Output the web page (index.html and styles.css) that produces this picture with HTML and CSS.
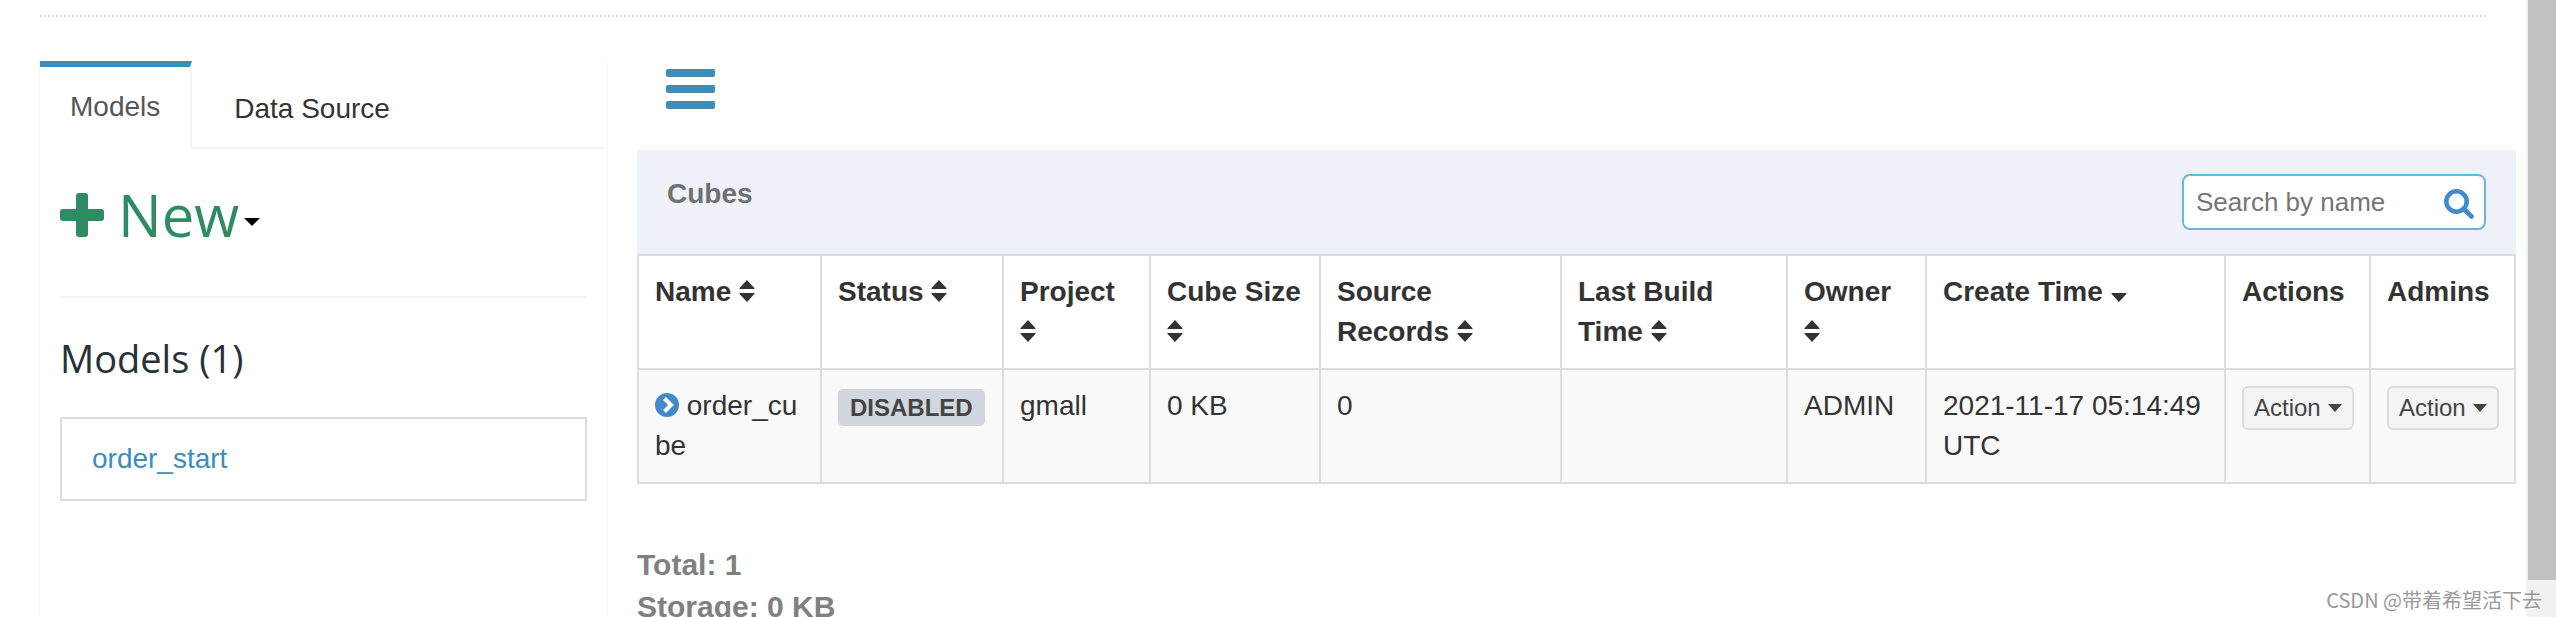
FILE: index.html
```html
<!DOCTYPE html>
<html lang="en">
<head>
    <meta charset="UTF-8">
    <meta name="viewport" content="width=device-width, initial-scale=1.0">
    <title>Cubes</title>
    <link rel="stylesheet" href="styles.css">
</head>
<body>
    <svg class="sprite" aria-hidden="true">
        <symbol id="sort" viewBox="0 0 16 22"><path d="M8 0 15.6 8.2Q16 9 15 9H1Q0 9 .4 8.2ZM1 13H15Q16 13 15.6 13.8L8 22 .4 13.8Q0 13 1 13Z"/></symbol>
        <symbol id="sort-down" viewBox="0 0 16 22"><path d="M1 13H15Q16 13 15.6 13.8L8 22 .4 13.8Q0 13 1 13Z"/></symbol>
    </svg>

    <div class="page">
        <hr class="divider">
        <div class="columns">
            <aside class="sidebar">
                <nav class="tabs">
                    <a class="tab active" href="#models">Models</a>
                    <a class="tab" href="#source">Data Source</a>
                </nav>
                <div class="tab-content">
                    <button class="new-btn" type="button">
                        <svg class="plus" viewBox="0 0 44 44"><path d="M19 0H25Q28 0 28 3V16H41Q44 16 44 19V25Q44 28 41 28H28V41Q28 44 25 44H19Q16 44 16 41V28H3Q0 28 0 25V19Q0 16 3 16H16V3Q16 0 19 0Z"/></svg>
                        <span>New</span>
                        <i class="caret"></i>
                    </button>
                    <hr class="line">
                    <h3 class="title">Models (1)</h3>
                    <ul class="models">
                        <li><a href="#order_start">order_start</a></li>
                    </ul>
                </div>
            </aside>

            <main class="content">
                <button class="menu-btn" type="button" aria-label="Toggle menu">
                    <svg viewBox="0 0 49 40"><rect width="49" height="8" rx="2"/><rect y="16" width="49" height="8" rx="2"/><rect y="32" width="49" height="8" rx="2"/></svg>
                </button>
                <div class="panel-head">
                    <h4>Cubes</h4>
                    <form class="search">
                        <input type="text" placeholder="Search by name" aria-label="Search by name">
                        <button type="button" aria-label="Search">
                            <svg viewBox="0 0 30 30"><circle cx="12.5" cy="12.5" r="10.2"/><path d="M20 20 27.5 27.5"/></svg>
                        </button>
                    </form>
                </div>
                <table class="cubes">
                    <colgroup>
                        <col class="c-name"><col class="c-status"><col class="c-project"><col class="c-size"><col class="c-records">
                        <col class="c-build"><col class="c-owner"><col class="c-time"><col class="c-action"><col class="c-action">
                    </colgroup>
                    <thead>
                        <tr>
                            <th>Name <svg class="sort"><use href="#sort"/></svg></th>
                            <th>Status <svg class="sort"><use href="#sort"/></svg></th>
                            <th>Project <svg class="sort"><use href="#sort"/></svg></th>
                            <th>Cube Size <svg class="sort"><use href="#sort"/></svg></th>
                            <th>Source Records <svg class="sort"><use href="#sort"/></svg></th>
                            <th>Last Build Time <svg class="sort"><use href="#sort"/></svg></th>
                            <th>Owner <svg class="sort"><use href="#sort"/></svg></th>
                            <th>Create Time <svg class="sort"><use href="#sort-down"/></svg></th>
                            <th>Actions</th>
                            <th>Admins</th>
                        </tr>
                    </thead>
                    <tbody>
                        <tr>
                            <td class="name"><svg class="chevron" viewBox="0 0 24 24"><circle cx="12" cy="12" r="12"/><path d="M9.5 5.5 16 12 9.5 18.5"/></svg> order_cube</td>
                            <td><span class="label">DISABLED</span></td>
                            <td>gmall</td>
                            <td>0 KB</td>
                            <td>0</td>
                            <td></td>
                            <td>ADMIN</td>
                            <td>2021-11-17 05:14:49 UTC</td>
                            <td><button class="action" type="button">Action <i class="caret"></i></button></td>
                            <td><button class="action" type="button">Action <i class="caret"></i></button></td>
                        </tr>
                    </tbody>
                </table>
                <div class="summary">
                    <div>Total: 1</div>
                    <div>Storage: 0 KB</div>
                </div>
            </main>
        </div>
    </div>

    <div class="scrollbar"><div class="thumb"></div></div>
    <div class="watermark">CSDN @带着希望活下去</div>
</body>
</html>
```

FILE: styles.css
```css
* {
    box-sizing: border-box;
}

body {
    margin: 0;
    display: flex;
    height: 100vh;
    overflow: hidden;
    background: #fff;
    color: #333;
    font-family: "Liberation Sans", Arial, sans-serif;
    font-size: 28px;
    line-height: 40px;
}

button {
    padding: 0;
    border: 0;
    background: none;
    font-family: inherit;
    cursor: pointer;
}

a {
    text-decoration: none;
}

.sprite {
    position: absolute;
    width: 0;
    height: 0;
}

.page {
    flex: 1;
    min-width: 0;
    display: flex;
    flex-direction: column;
    padding: 15px 10px 0 39px;
}

.divider {
    align-self: stretch;
    margin: 0 30px 44px 1px;
    border: 0;
    border-top: 2px dotted #ddd;
}

.columns {
    flex: 1;
    display: grid;
    grid-template-columns: 569px 1fr;
    gap: 29px;
}

/* sidebar */
.sidebar {
    border: solid #f7f7f7;
    border-width: 0 1px;
}

.tabs {
    display: flex;
    border-bottom: 2px solid #f4f4f4;
}

.tab {
    padding: 26px 42px 18px;
    border-top: 2px solid transparent;
    color: #333;
}

.tab.active {
    padding: 20px 30px;
    margin-bottom: -2px;
    border-top: 6px solid #3c8dbc;
    border-right: 2px solid #f4f4f4;
    background: #fff;
    color: #555;
}

.tab-content {
    padding: 26px 20px;
}

.new-btn {
    display: flex;
    align-items: center;
    height: 80px;
    color: #2e8b62;
    font-family: "Open Sans", "Noto Sans", sans-serif;
    font-size: 58px;
    line-height: 80px;
}

.plus {
    width: 44px;
    height: 44px;
    margin-right: 14px;
    fill: currentColor;
}

.caret {
    display: inline-block;
    border: solid transparent;
    border-width: 8px 8px 0;
    border-top-color: currentColor;
}

.new-btn .caret {
    margin: 14px 0 0 5px;
    color: #000;
}

.line {
    margin: 41px 0 0;
    border: 0;
    border-top: 2px solid #f4f4f4;
}

.title {
    margin: 35px 0 34px;
    color: #263238;
    font-family: "Open Sans", "Noto Sans", sans-serif;
    font-size: 38px;
    font-weight: 400;
    line-height: 50px;
}

.models {
    margin: 0;
    padding: 0;
    list-style: none;
}

.models li {
    padding: 20px 30px;
    border: 2px solid #ddd;
}

.models a {
    color: #3c8dbc;
}

/* cube list */
.menu-btn {
    display: block;
    margin: 8px 0 41px 29px;
}

.menu-btn svg {
    display: block;
    width: 49px;
    height: 40px;
    fill: #3c8dbc;
}

.panel-head {
    display: flex;
    justify-content: space-between;
    align-items: flex-start;
    height: 104px;
    padding: 24px 30px;
    background: #eef1f7;
}

.panel-head h4 {
    margin: 0;
    color: #707070;
    font-size: 28px;
    line-height: 40px;
}

.search {
    display: flex;
    align-items: center;
    width: 304px;
    height: 56px;
    padding: 0 10px 0 12px;
    border: 2px solid #6cb3e1;
    border-radius: 8px;
    background: #fff;
}

.search input {
    flex: 1;
    min-width: 0;
    padding: 0;
    border: 0;
    outline: 0;
    background: none;
    color: #333;
    font-family: inherit;
    font-size: 26px;
}

.search input::placeholder {
    color: #757575;
}

.search svg {
    display: block;
    width: 30px;
    height: 30px;
    margin-top: 4px;
    fill: none;
    stroke: #428bca;
    stroke-width: 4.6;
    stroke-linecap: round;
}

.cubes {
    width: 100%;
    border-collapse: collapse;
    table-layout: fixed;
}

.c-name { width: 183px; }
.c-status { width: 182px; }
.c-project { width: 147px; }
.c-size { width: 170px; }
.c-records { width: 241px; }
.c-build { width: 226px; }
.c-owner { width: 139px; }
.c-time { width: 299px; }
.c-action { width: 145px; }

.cubes th,
.cubes td {
    padding: 16px;
    border: 2px solid #ddd;
    text-align: left;
    vertical-align: top;
}

.cubes tbody td {
    background: #f9f9f9;
}

.cubes .name {
    word-break: break-all;
}

.sort {
    width: 16px;
    height: 22px;
    margin-bottom: -1px;
    fill: #333;
}

.chevron {
    width: 24px;
    height: 24px;
    margin-bottom: -2px;
    fill: #428bca;
}

.chevron path {
    fill: none;
    stroke: #fff;
    stroke-width: 4;
}

.label {
    display: inline-block;
    margin-top: 3px;
    padding: 0 12px;
    border-radius: 5px;
    background: #d2d6de;
    color: #444;
    font-size: 24px;
    font-weight: 700;
    line-height: 37px;
    vertical-align: top;
}

.action {
    display: flex;
    align-items: center;
    gap: 7px;
    height: 44px;
    padding: 0 10px;
    border: 2px solid #ddd;
    border-radius: 6px;
    background: #f4f4f4;
    color: #444;
    font-size: 24px;
    line-height: 36px;
}

.action .caret {
    border-width: 8px 7px 0;
}

.summary {
    margin-top: 60px;
    color: #808080;
    font-size: 30px;
    font-weight: 700;
    line-height: 42px;
}

.scrollbar {
    width: 30px;
    padding-left: 2px;
    background: #f1f1f1;
}

.thumb {
    height: 94%;
    background: #c1c1c1;
}

.watermark {
    position: absolute;
    right: 14px;
    bottom: 2px;
    color: #999;
    font-family: "Noto Sans CJK SC", sans-serif;
    font-size: 20px;
    line-height: 30px;
    text-shadow: 1px 1px 0 #fff;
}
```
